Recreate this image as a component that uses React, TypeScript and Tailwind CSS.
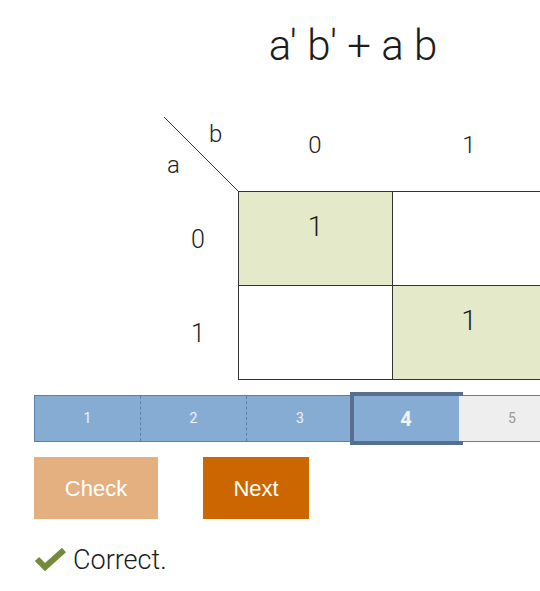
import React from 'react';

const steps = [1, 2, 3, 4, 5];
const current = 4;

function CornerCell() {
  return (
    <div className="relative">
      <svg className="absolute inset-0" width="74" height="74" viewBox="0 0 74 74">
        <line x1="0" y1="0" x2="74" y2="74" stroke="#333" strokeWidth="1" />
      </svg>
      <span className="absolute left-[45px] top-[3px] text-[24px] leading-[28px] font-light">b</span>
      <span className="absolute left-[3px] top-[34px] text-[24px] leading-[28px] font-light">a</span>
    </div>
  );
}

function MapCell({ value, last, lastRow }: { value: number; last?: boolean; lastRow?: boolean }) {
  return (
    <div
      className={`border-l border-t border-[#333] text-center text-[28px] font-light pt-[18px] leading-[33px] ${
        value ? 'bg-[#e3e9c9]' : 'bg-white'
      } ${last ? 'border-r' : ''} ${lastRow ? 'border-b' : ''}`}
    >
      {value ? '1' : ''}
    </div>
  );
}

export default function App() {
  return (
    <div className="w-[540px] h-[591px] overflow-hidden bg-white text-[#1c1c1c] font-['Roboto',sans-serif]">
      {/* titre */}
      <div className="ml-[160px] w-[386px] pt-[22px] text-center text-[42px] leading-[48px] font-light">
        a' b' + a b
      </div>

      {/* tableau de Karnaugh */}
      <div className="ml-[164px] mt-[47px] grid grid-cols-[74px_154px_154px] grid-rows-[74px_94px_95px] w-[382px]">
        <CornerCell />
        <div className="text-center text-[24px] leading-[28px] font-light pt-[14px]">0</div>
        <div className="text-center text-[24px] leading-[28px] font-light pt-[14px]">1</div>

        <div className="flex items-center justify-center pr-[6px] pt-[3px] text-[25px] font-light">0</div>
        <MapCell value={1} />
        <MapCell value={0} last />

        <div className="flex items-center justify-center pr-[6px] pt-[3px] text-[25px] font-light">1</div>
        <MapCell value={0} lastRow />
        <MapCell value={1} last lastRow />
      </div>

      {/* barre de progression */}
      <div className="ml-[34px] mt-[15px] flex w-[700px] h-[47px] border-y border-l border-[#5a80ab]">
        {steps.map((s) => (
          <div
            key={s}
            className={`relative w-[106px] shrink-0 flex items-center justify-center ${
              s <= current ? 'bg-[#87acd3]' : 'bg-[#eeeeee]'
            } ${s < current - 1 ? 'border-r border-dashed border-[#5a80ab]' : ''}`}
          >
            {s === current && (
              <div className="absolute -top-[4px] -bottom-[4px] -left-[3px] -right-[4px] border-4 border-[#576e90]" />
            )}
            <span
              className={
                s === current
                  ? 'relative text-[20px] font-bold text-[#f2f2f2]'
                  : s < current
                    ? 'text-[14px] text-[#eef2f7]'
                    : 'text-[14px] text-[#999]'
              }
            >
              {s}
            </span>
          </div>
        ))}
      </div>

      {/* boutons */}
      <div className="ml-[34px] mt-[15px] flex gap-[45px] font-['Liberation_Sans',sans-serif] text-[22px] text-white">
        <button className="w-[124px] h-[62px] bg-[#e5b07f]">Check</button>
        <button className="w-[106px] h-[62px] bg-[#cc6600]">Next</button>
      </div>

      {/* résultat */}
      <div className="ml-[34px] mt-[26px] flex items-center gap-[6px]">
        <svg width="33" height="26" viewBox="0 0 33 26" className="-mt-[3px]">
          <path d="M3 13 L11 21 L30 4" fill="none" stroke="#758a3a" strokeWidth="6" strokeLinecap="butt" strokeLinejoin="miter" />
        </svg>
        <span className="text-[27px] font-light leading-[30px]">Correct.</span>
      </div>
    </div>
  );
}
